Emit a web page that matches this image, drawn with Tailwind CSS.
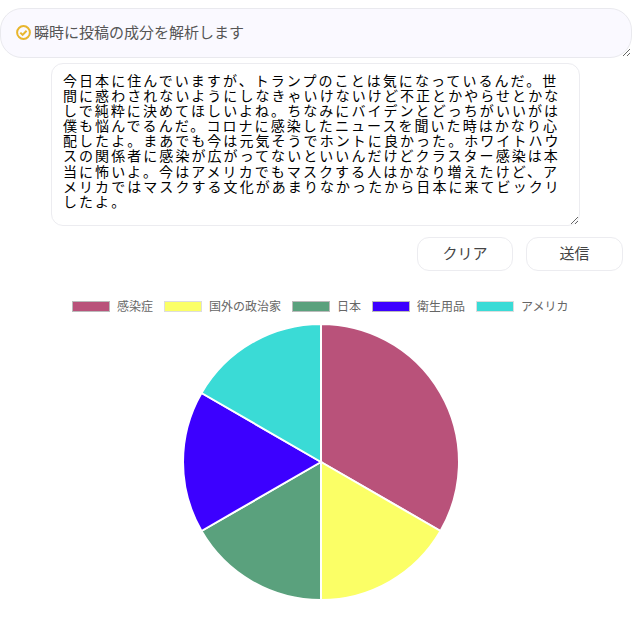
<!DOCTYPE html>
<html lang="ja">
<head>
  <meta charset="UTF-8" />
  <title>投稿の成分解析</title>
  <script src="https://cdn.jsdelivr.net/npm/@tailwindcss/browser@4"></script>
</head>
<body class="bg-white font-['Noto_Sans_CJK_JP','Noto_Sans',sans-serif] w-[632px] h-[641px] overflow-hidden">

  <!-- Heading box -->
  <div class="mt-2 h-[50px] bg-[#faf9ff] border border-[#e9e9ee] rounded-[22px] pl-[15px] pb-[2px] flex items-center gap-[3px] resize overflow-hidden text-[15px] text-[#555]">
    <svg class="w-[15px] h-[15px] shrink-0" viewBox="0 0 15 15" fill="none" stroke="#e8b62e" stroke-width="2">
      <circle cx="7.5" cy="7.5" r="6.4" />
      <path d="M4.3 7.6l2.3 2.3 4-4.2" />
    </svg>
    <span>瞬時に投稿の成分を解析します</span>
  </div>

  <!-- Input -->
  <div class="mt-[5px] pl-[51px]">
    <textarea class="block w-[529px] h-[163px] bg-white border border-[#ececf0] rounded-xl pl-[11px] pr-[14px] pt-[9px] text-[14px] leading-[15.1px] tracking-[2.06px] text-black outline-none font-['Noto_Sans_CJK_JP',sans-serif]">今日本に住んでいますが、トランプのことは気になっているんだ。世間に惑わされないようにしなきゃいけないけど不正とかやらせとかなしで純粋に決めてほしいよね。ちなみにバイデンとどっちがいいがは僕も悩んでるんだ。コロナに感染したニュースを聞いた時はかなり心配したよ。まあでも今は元気そうでホントに良かった。ホワイトハウスの関係者に感染が広がってないといいんだけどクラスター感染は本当に怖いよ。今はアメリカでもマスクする人はかなり増えたけど、アメリカではマスクする文化があまりなかったから日本に来てビックリしたよ。</textarea>
  </div>

  <!-- Buttons -->
  <div class="mt-[11px] pl-[417px] flex gap-[13px] text-[15px] text-[#444]">
    <button class="w-[96px] h-[34px] pb-[2px] bg-white border border-[#ececf0] rounded-xl">クリア</button>
    <button class="w-[97px] h-[34px] pb-[2px] bg-white border border-[#ececf0] rounded-xl">送信</button>
  </div>

  <!-- Legend -->
  <div class="mt-[27px] h-[16px] pl-[72px] flex items-center text-[12px] text-[#666]">
    <span class="w-[38px] h-[11px] shrink-0 bg-[#b9527a] border border-[#bbb] mr-[7px]"></span><span class="mr-[11px]">感染症</span>
    <span class="w-[38px] h-[11px] shrink-0 bg-[#fbff66] border border-[#ddd] mr-[7px]"></span><span class="mr-[11px]">国外の政治家</span>
    <span class="w-[38px] h-[11px] shrink-0 bg-[#5aa17d] border border-[#bbb] mr-[7px]"></span><span class="mr-[11px]">日本</span>
    <span class="w-[38px] h-[11px] shrink-0 bg-[#3c00ff] border border-[#bbb] mr-[7px]"></span><span class="mr-[11px]">衛生用品</span>
    <span class="w-[38px] h-[11px] shrink-0 bg-[#3adbd6] border border-[#ddd] mr-[7px]"></span><span>アメリカ</span>
  </div>

  <!-- Pie chart -->
  <div class="mt-[8px] pl-[181px]">
    <svg width="280" height="280" viewBox="0 0 280 280" stroke="#fff" stroke-width="2">
      <path d="M140 140L140 2A138 138 0 0 1 259.5 209Z" fill="#b9527a" />
      <path d="M140 140L259.5 209A138 138 0 0 1 140 278Z" fill="#fbff66" />
      <path d="M140 140L140 278A138 138 0 0 1 20.5 209Z" fill="#5aa17d" />
      <path d="M140 140L20.5 209A138 138 0 0 1 20.5 71Z" fill="#3c00ff" />
      <path d="M140 140L20.5 71A138 138 0 0 1 140 2Z" fill="#3adbd6" />
    </svg>
  </div>

</body>
</html>
